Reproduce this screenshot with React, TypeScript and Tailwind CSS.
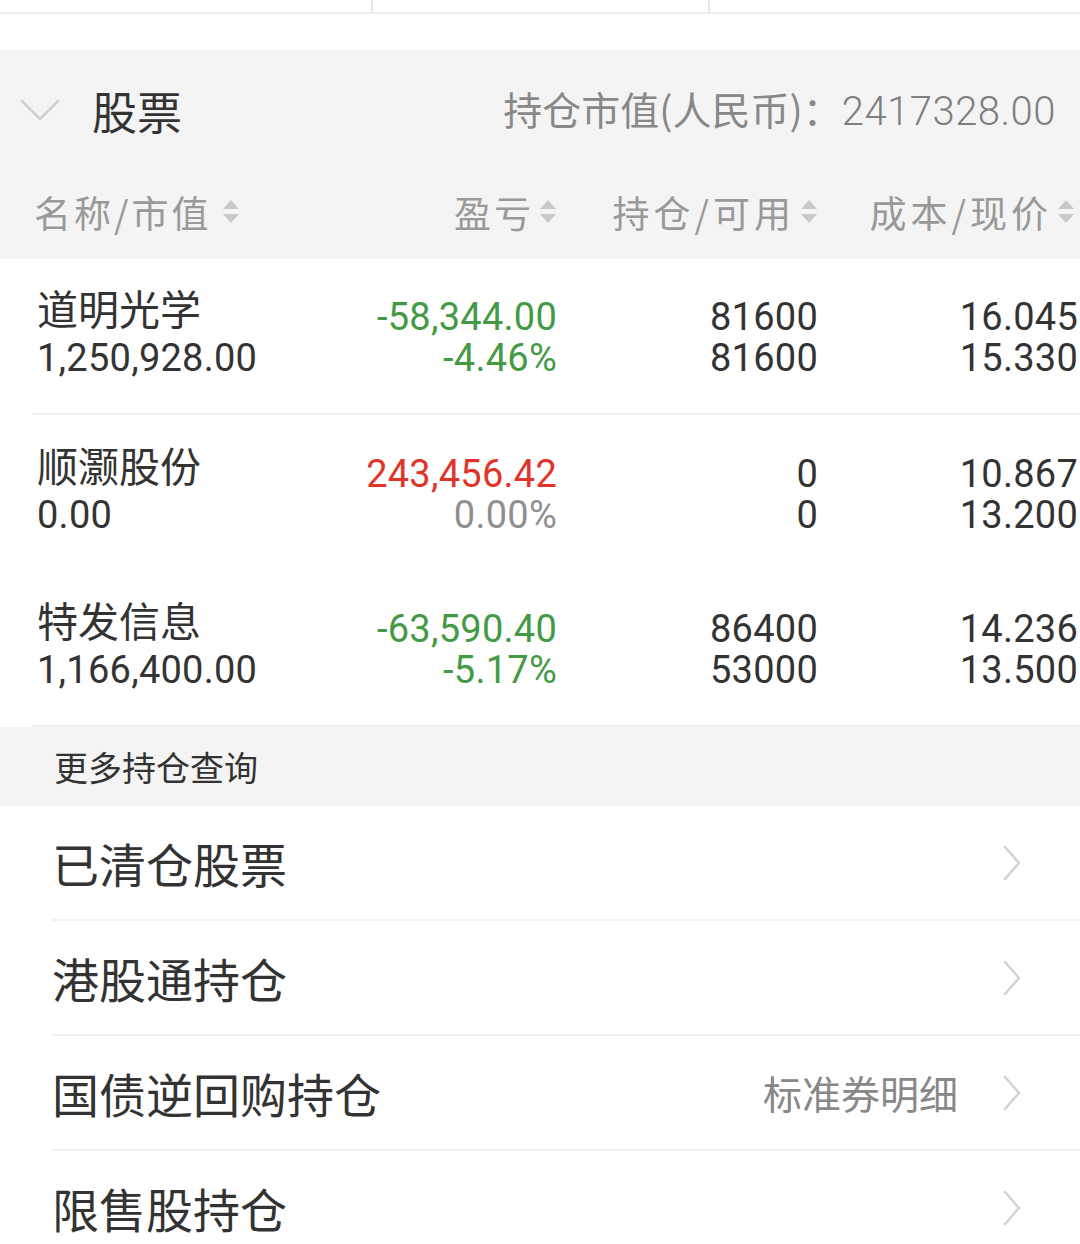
import React from "react";

const CJK = '"Noto Sans CJK SC", "Noto Sans", sans-serif';
const NUM = 'Roboto, "Noto Sans CJK SC", sans-serif';

function SortIcon() {
  return (
    <svg width="18" height="28" viewBox="0 0 18 28" className="shrink-0">
      <path d="M9 2 L17 11 L1 11 Z" fill="#c9c9c9" />
      <path d="M1 16 L17 16 L9 25 Z" fill="#c9c9c9" />
    </svg>
  );
}

function Chevron() {
  return (
    <svg width="20" height="36" viewBox="0 0 20 36" className="shrink-0">
      <path d="M3 2 L17 18 L3 34" fill="none" stroke="#d2d2d2" strokeWidth="2.5" strokeLinecap="round" strokeLinejoin="round" />
    </svg>
  );
}

type Row = {
  name: string;
  value: string;
  pl: string;
  pct: string;
  color: "green" | "red";
  hold: string;
  avail: string;
  cost: string;
  price: string;
  divider: boolean;
};

const rows: Row[] = [
  { name: "道明光学", value: "1,250,928.00", pl: "-58,344.00", pct: "-4.46%", color: "green", hold: "81600", avail: "81600", cost: "16.045", price: "15.330", divider: true },
  { name: "顺灏股份", value: "0.00", pl: "243,456.42", pct: "0.00%", color: "red", hold: "0", avail: "0", cost: "10.867", price: "13.200", divider: false },
  { name: "特发信息", value: "1,166,400.00", pl: "-63,590.40", pct: "-5.17%", color: "green", hold: "86400", avail: "53000", cost: "14.236", price: "13.500", divider: true },
];

const links = [
  { label: "已清仓股票", extra: "" },
  { label: "港股通持仓", extra: "" },
  { label: "国债逆回购持仓", extra: "标准券明细" },
  { label: "限售股持仓", extra: "" },
];

const numCls = "text-[38px] leading-[41px] tracking-[0.25px]";

export default function App() {
  return (
    <div className="w-[1080px] h-[1244px] overflow-hidden bg-white" style={{ fontFamily: CJK }}>
      {/* top tab remnant */}
      <div className="flex h-[14px] border-b-2 border-[#ececec]">
        <div className="w-[373px] border-r-2 border-[#e6e6e6]" />
        <div className="w-[337px] border-r-2 border-[#e6e6e6]" />
        <div className="flex-1" />
      </div>
      <div className="h-[36px]" />

      {/* section header */}
      <div className="bg-[#f4f4f4] h-[209px] flex flex-col">
        <div className="h-[120px] shrink-0 flex items-center pl-[20px] pr-[24px]">
          <svg width="40" height="24" viewBox="0 0 40 24" className="shrink-0">
            <path d="M2 3 L20 21 L38 3" fill="none" stroke="#cfcfcf" strokeWidth="2.5" strokeLinecap="round" strokeLinejoin="round" />
          </svg>
          <span className="ml-[32px] text-[45px] leading-none text-[#333]">股票</span>
          <span className="ml-auto text-[39px] leading-none text-[#888]">
            持仓市值(人民币)：<span style={{ fontFamily: NUM }} className="text-[40px] font-light tracking-[0.5px] text-[#7f7f7f]">2417328.00</span>
          </span>
        </div>
        <div className="flex items-center h-[84px] shrink-0 pl-[34px] text-[37px] leading-none text-[#999]">
          <div className="w-[300px] flex items-center gap-[10px]">
            <span className="tracking-[3px]">名称/市值</span>
            <SortIcon />
          </div>
          <div className="w-[223px] flex items-center justify-end gap-[5px]">
            <span className="tracking-[3px]">盈亏</span>
            <SortIcon />
          </div>
          <div className="w-[261px] flex items-center justify-end gap-[5px]">
            <span className="tracking-[4px]">持仓/可用</span>
            <SortIcon />
          </div>
          <div className="w-[257px] flex items-center justify-end gap-[5px]">
            <span className="tracking-[4px]">成本/现价</span>
            <SortIcon />
          </div>
        </div>
      </div>

      {/* rows */}
      {rows.map((r, i) => (
        <div key={i} className={`ml-[32px] h-[156px] flex items-center ${r.divider ? "border-b-2 border-[#f1f1f1]" : ""}`}>
          <div className="w-[268px] pl-[5px] flex flex-col -mt-[6px]">
            <span className="text-[41px] leading-[50px] text-[#333]">{r.name}</span>
            <span style={{ fontFamily: NUM }} className="text-[38px] leading-[52px] text-[#333] tracking-[0.25px]">{r.value}</span>
          </div>
          <div className="w-[257px] flex flex-col items-end mt-[4px]" style={{ fontFamily: NUM }}>
            <span className={`${numCls} ${r.color === "green" ? "text-[#449a44]" : "text-[#e0342a]"}`}>{r.pl}</span>
            <span className={`${numCls} ${r.color === "green" ? "text-[#449a44]" : "text-[#8f8f8f]"}`}>{r.pct}</span>
          </div>
          <div className="w-[261px] flex flex-col items-end text-[#333] mt-[4px]" style={{ fontFamily: NUM }}>
            <span className={numCls}>{r.hold}</span>
            <span className={numCls}>{r.avail}</span>
          </div>
          <div className="w-[260px] flex flex-col items-end text-[#333] mt-[4px]" style={{ fontFamily: NUM }}>
            <span className={numCls}>{r.cost}</span>
            <span className={numCls}>{r.price}</span>
          </div>
        </div>
      ))}

      {/* more */}
      <div className="bg-[#f4f4f4] h-[79px] flex items-center pl-[54px]">
        <span className="text-[34px] leading-none text-[#333]">更多持仓查询</span>
      </div>

      {links.map((l, i) => (
        <div key={i} className="ml-[52px] h-[115px] flex items-center pr-[58px] border-b-2 border-[#f1f1f1]">
          <span className="text-[47px] leading-none text-[#333]">{l.label}</span>
          {l.extra && <span className="ml-auto mr-[44px] text-[39px] leading-none text-[#888]">{l.extra}</span>}
          <span className={l.extra ? "" : "ml-auto"}>
            <Chevron />
          </span>
        </div>
      ))}
    </div>
  );
}
